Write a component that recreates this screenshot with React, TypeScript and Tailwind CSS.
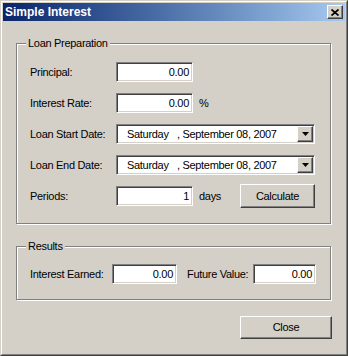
import type { ReactNode } from 'react'

// Win2000-style "Simple Interest" dialog

function Edit({ value, className = '' }: { value: string; className?: string }) {
  return (
    <div
      className={`h-[20px] flex items-center justify-end pr-[3px] bg-white border border-t-[#808080] border-l-[#808080] border-b-white border-r-white shadow-[inset_1px_1px_0_#404040,inset_-1px_-1px_0_#d4d0c8] ${className}`}
    >
      {value}
    </div>
  )
}

function Button({ children, className = '' }: { children: ReactNode; className?: string }) {
  return (
    <div
      className={`flex items-center justify-center bg-[#d4d0c8] border border-t-white border-l-white border-b-[#404040] border-r-[#404040] shadow-[inset_-1px_-1px_0_#808080] ${className}`}
    >
      {children}
    </div>
  )
}

function DateCombo() {
  return (
    <div className="h-[20px] w-[199px] flex items-center bg-white border border-t-[#808080] border-l-[#808080] border-b-white border-r-white shadow-[inset_1px_1px_0_#404040,inset_-1px_-1px_0_#d4d0c8] p-px">
      <span className="flex-1 pl-[9px] whitespace-pre">Saturday   , September 08, 2007</span>
      <Button className="w-[16px] h-[16px]">
        <svg width="7" height="4" viewBox="0 0 7 4" aria-hidden>
          <polygon points="0,0 7,0 3.5,4" fill="#000" />
        </svg>
      </Button>
    </div>
  )
}

function Group({ title, className, children }: { title: string; className: string; children: ReactNode }) {
  return (
    <div
      className={`relative ml-[13px] w-[315px] border border-[#808080] shadow-[inset_1px_1px_0_#fff,1px_1px_0_#fff] pl-[13px] ${className}`}
    >
      <span className="absolute top-[-7px] left-[9px] px-[2px] bg-[#d4d0c8] leading-[13px]">{title}</span>
      {children}
    </div>
  )
}

function Row({ label, children }: { label: string; children: ReactNode }) {
  return (
    <div className="h-[20px] flex items-center">
      <span className="w-[86px]">{label}</span>
      {children}
    </div>
  )
}

export default function App() {
  return (
    <div className="w-[348px] h-[356px] bg-[#d4d0c8] border border-t-[#d4d0c8] border-l-[#d4d0c8] border-r-[#404040] border-b-[#404040] font-['Liberation_Sans',Arial,sans-serif] text-[11px] leading-none tracking-[-0.3px] text-black">
      <div className="h-full border border-t-white border-l-white border-r-[#808080] border-b-[#808080] p-px">
        {/* Title bar */}
        <div className="h-[18px] flex items-center justify-between pl-[2px] pr-[2px] bg-linear-to-r from-[#0a246a] to-[#a6caf0]">
          <span className="text-white font-bold text-[12px] tracking-normal">Simple Interest</span>
          <Button className="w-[16px] h-[14px]">
            <svg width="8" height="7" viewBox="0 0 8 7" aria-hidden>
              <path d="M0.5 0.5 L7.5 6.5 M7.5 0.5 L0.5 6.5" stroke="#000" strokeWidth="1.7" />
            </svg>
          </Button>
        </div>

        {/* Loan preparation */}
        <Group title="Loan Preparation" className="mt-[22px] h-[181px] pt-[18px] flex flex-col gap-[11px]">
          <Row label="Principal:">
            <Edit value="0.00" className="w-[77px]" />
          </Row>
          <Row label="Interest Rate:">
            <Edit value="0.00" className="w-[77px]" />
            <span className="ml-[6px]">%</span>
          </Row>
          <Row label="Loan Start Date:">
            <DateCombo />
          </Row>
          <Row label="Loan End Date:">
            <DateCombo />
          </Row>
          <Row label="Periods:">
            <Edit value="1" className="w-[77px]" />
            <span className="ml-[6px] w-[41px]">days</span>
            <Button className="w-[75px] h-[24px] shrink-0">Calculate</Button>
          </Row>
        </Group>

        {/* Results */}
        <Group title="Results" className="mt-[22px] h-[54px] pt-[17px]">
          <div className="h-[20px] flex items-center">
            <span className="w-[82px]">Interest Earned:</span>
            <Edit value="0.00" className="w-[65px]" />
            <span className="ml-[10px] w-[66px]">Future Value:</span>
            <Edit value="0.00" className="w-[63px]" />
          </div>
        </Group>

        <div className="mt-[16px] flex justify-end pr-[13px]">
          <Button className="w-[92px] h-[23px]">Close</Button>
        </div>
      </div>
    </div>
  )
}
